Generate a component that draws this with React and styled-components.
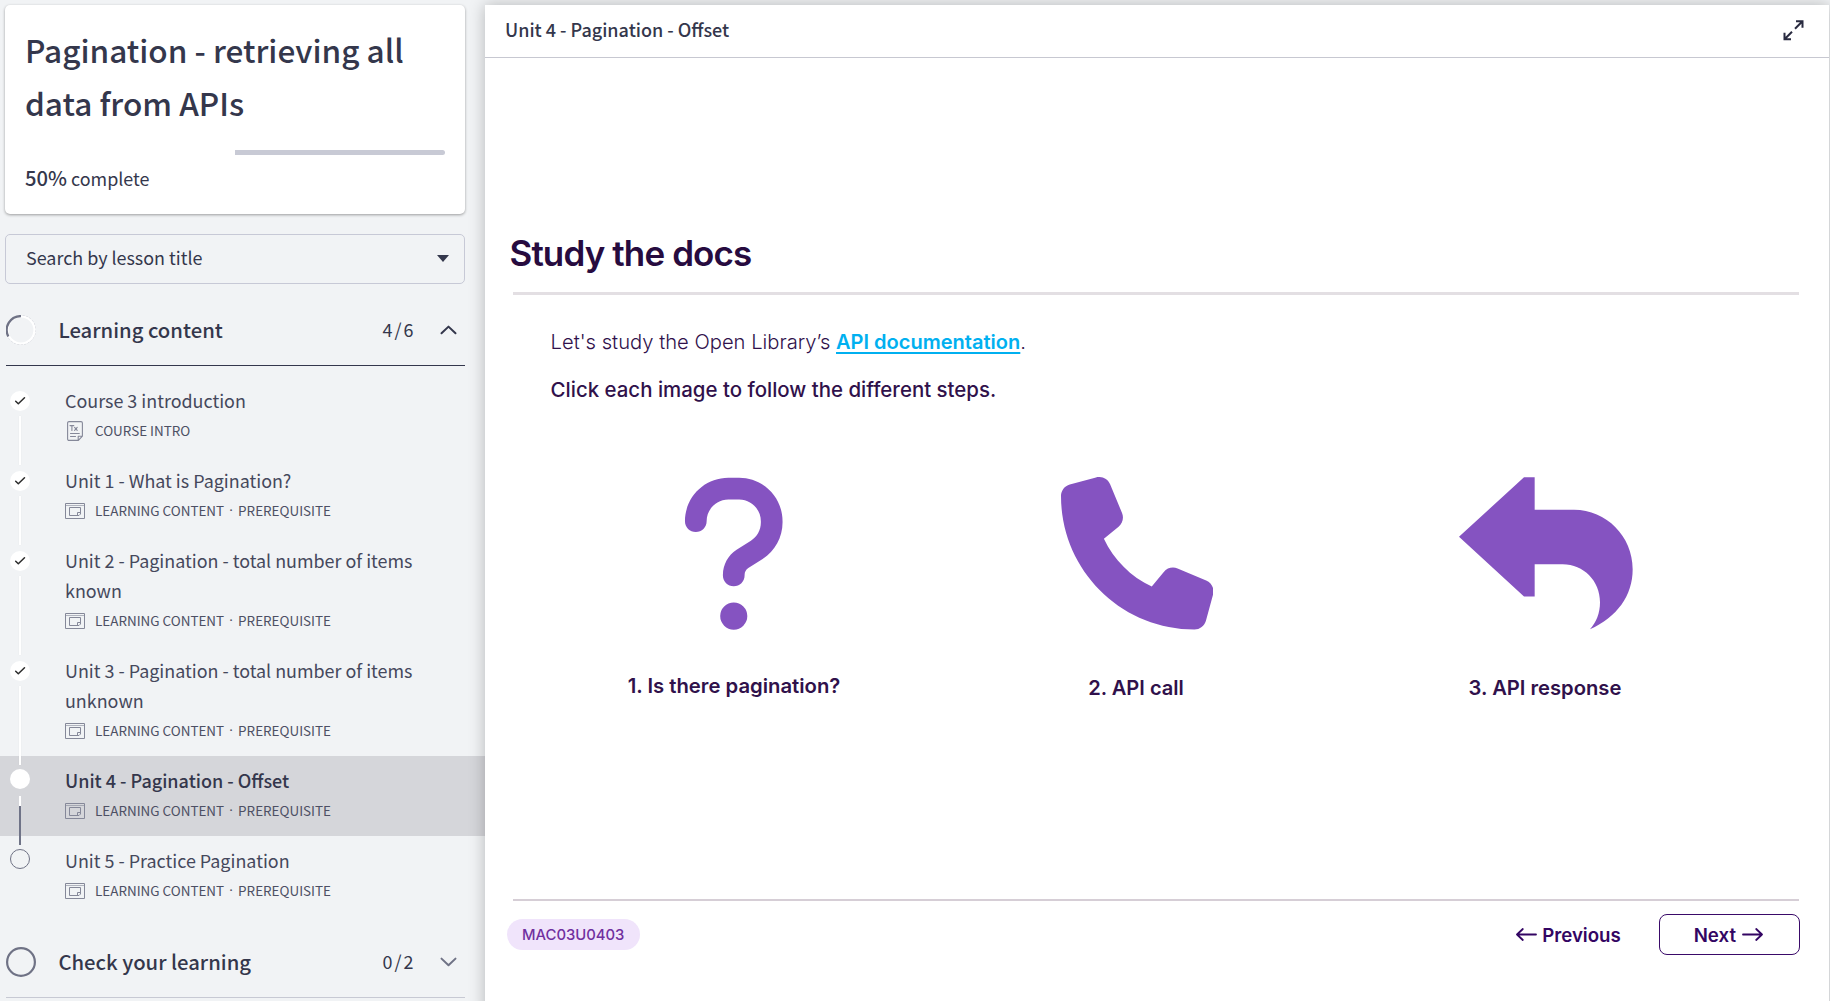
import React from 'react';
import styled, { createGlobalStyle } from 'styled-components';
import { FaQuestion, FaPhone } from 'react-icons/fa6';

const GlobalStyle = createGlobalStyle`
  * { box-sizing: border-box; }
  body { margin: 0; overflow: hidden; background: #f1f3f5; }
  h1, h2, h3, p, ul { margin: 0; padding: 0; font-weight: inherit; }
  svg { display: block; flex-shrink: 0; }
`;

const Page = styled.div`
  display: flex;
  width: 1830px;
  height: 1001px;
  overflow: hidden;
  background: #f1f3f5;
  color: #34374c;
  font-family: 'Noto Sans CJK SC', 'Source Sans Pro', sans-serif;
  font-size: 17.92px;
  line-height: 30px;
`;

const Sidebar = styled.aside`
  width: 485px;
  flex-shrink: 0;
  padding-top: 5px;
`;

const CourseCard = styled.section`
  width: 460px;
  height: 209px;
  margin-left: 5px;
  padding: 18px 20px 0;
  background: #fff;
  border-radius: 5px;
  box-shadow: 0 1px 3px rgba(0, 0, 0, 0.36);
`;

const CourseTitle = styled.h1`
  font-size: 31.55px;
  font-weight: 500;
  line-height: 53px;
`;

const Progress = styled.div`
  height: 5px;
  margin-top: 21px;
  display: flex;
  justify-content: flex-end;
  background: #fff;
`;

const Remaining = styled.div`
  width: 50%;
  background: #c8cad5;
  border-radius: 0 3px 3px 0;
`;

const ProgressText = styled.p`
  margin-top: 8px;
  strong { font-size: 20.2px; font-weight: 500; }
`;

const Search = styled.div`
  width: 460px;
  height: 50px;
  margin: 20px 0 0 5px;
  padding: 0 15px 5px 20px;
  display: flex;
  align-items: center;
  justify-content: space-between;
  border: 1px solid #c7c9d6;
  border-radius: 5px;
`;

const Caret = styled.i`
  margin-top: 4px;
  border: 6px solid transparent;
  border-top: 7px solid #34374c;
  border-bottom: 0;
`;

const SectionHeader = styled.header`
  width: 459.5px;
  height: 71px;
  margin: 11px 0 0 5.5px;
  padding-left: 0.5px;
  display: flex;
  align-items: center;
  border-bottom: 1px solid ${(p) => (p.$open ? '#34374c' : '#c7c9d3')};
`;

const SectionTitle = styled.h2`
  flex: 1;
  margin: -3px 0 0 22.4px;
  font-size: 20.27px;
  font-weight: 500;
`;

const Count = styled.span`
  width: 57px;
  letter-spacing: 2px;
  margin-top: -3px;
`;

const ChevronBox = styled.span`
  width: 25.5px;
  padding-left: 0.5px;
  color: ${(p) => (p.$open ? '#34374c' : '#6f7285')};
`;

const LessonList = styled.ul`
  padding-top: 10px;
  list-style: none;
`;

const Lesson = styled.li`
  display: flex;
  padding-bottom: 11px;
  background: ${(p) => (p.$active ? '#d5d6da' : 'transparent')};
`;

const Rail = styled.div`
  position: relative;
  z-index: 1;
  width: 40px;
  margin: ${(p) => (p.$done ? '15px' : '13px')} 25px -20px 0;
  display: flex;
  flex-direction: column;
  align-items: center;
`;

const Dot = styled.span`
  width: 20px;
  height: 20px;
  display: flex;
  align-items: center;
  justify-content: center;
  border-radius: 50%;
  background: ${(p) => (p.$empty ? 'transparent' : '#fff')};
  border: ${(p) => (p.$empty ? '1px solid #6f7285' : '0')};
`;

const Connector = styled.span`
  flex: 1;
  width: 2px;
  margin-top: ${(p) => (p.$pending ? '7px' : '5px')};
  background: ${(p) => (p.$pending ? 'linear-gradient(#fff 10px, #6f7387 10px)' : '#fff')};
  box-shadow: ${(p) => (p.$pending ? 'none' : '0 0 1px rgba(0, 0, 0, 0.12)')};
`;

const LessonBody = styled.div`
  width: 360px;
  padding-top: 9px;
`;

const LessonTitle = styled.h3`
  font-size: ${(p) => (p.$active ? '18px' : '17.92px')};
  font-weight: ${(p) => (p.$active ? 500 : 400)};
  color: ${(p) => (p.$active ? '#34374c' : '#45485c')};
`;

const Meta = styled.div`
  height: 30px;
  display: flex;
  align-items: center;
  color: #4d5064;
  font-size: 13.45px;
  white-space: pre;
`;

const MetaIcon = styled.span`
  width: 20px;
  margin: 1px 10px 0 0;
  display: flex;
  justify-content: center;
  color: #858899;
`;

const Separator = styled.span`
  width: 14px;
  text-align: center;
  font-family: 'Noto Sans', sans-serif;
`;

const Main = styled.main`
  width: 1344px;
  height: 1010px;
  margin-top: 5px;
  background: #fff;
  box-shadow: 0 0 15px rgba(0, 0, 0, 0.25);
`;

const TopBar = styled.header`
  height: 53px;
  padding: 0 25px 0 20px;
  display: flex;
  align-items: center;
  justify-content: space-between;
  border-bottom: 1px solid #c7c8d1;

  svg { margin-bottom: 2px; }
`;

const UnitName = styled.h2`
  margin-top: -4px;
  font-size: 18px;
  font-weight: 500;
`;

const Slide = styled.article`
  padding: 170px 30px 0 28px;
  color: #30114b;
  font-family: Inter, sans-serif;
`;

const SlideTitle = styled.h1`
  margin: 0 0 14px -3.5px;
  font-size: 35px;
  font-weight: 600;
  line-height: 50px;
  letter-spacing: -0.88px;
  color: #270b3f;
`;

const Rule = styled.div`
  height: ${(p) => p.$weight}px;
  background: ${(p) => p.$color};
`;

const Copy = styled.div`
  padding: 32px 0 0 37.6px;
`;

const Intro = styled.p`
  font-size: 20.2px;
  font-weight: 300;
`;

const DocLink = styled.a`
  color: #00b0f0;
  font-size: 20.05px;
  font-weight: 600;
  text-decoration: underline;
  text-decoration-thickness: 1.5px;
  text-underline-offset: 3px;
  text-decoration-skip-ink: none;
`;

const Instruction = styled.p`
  margin-top: 18px;
  font-size: 20.45px;
  font-weight: 500;
`;

const Steps = styled.div`
  margin: 72px 0 0 19.5px;
  display: flex;
  height: 422px;
`;

const Step = styled.button`
  width: ${(p) => p.$width}px;
  padding: 0;
  display: flex;
  flex-direction: column;
  align-items: center;
  border: 0;
  background: none;
  font: inherit;
`;

const StepArt = styled.span`
  height: 153px;
  display: flex;
  align-items: center;
  color: #8553c1;
`;

const StepLabel = styled.span`
  margin: ${(p) => p.$drop}px ${(p) => p.$inset || 0}px 0 0;
  color: #30114b;
  font-size: ${(p) => p.$size}px;
  font-weight: 600;
  line-height: 30px;
`;

const Footer = styled.footer`
  padding: 13px 0 0;
  display: flex;
  align-items: flex-start;
  color: #330563;
  font-size: 18.65px;
  font-weight: 600;
`;

const Code = styled.span`
  width: 133px;
  height: 31px;
  margin: 5px auto 0 -6px;
  padding: 1px 0 0 15px;
  border-radius: 16px;
  background: #f0e4fb;
  color: #7030a0;
  font-size: 14.83px;
  font-weight: 500;
`;

const NavButton = styled.button`
  height: 41px;
  padding: ${(p) => (p.$outlined ? '0 36px 0 34px' : '0')};
  margin: ${(p) => (p.$outlined ? '0 -0.5px 0 38px' : '0')};
  display: flex;
  align-items: center;
  gap: 5.5px;
  color: inherit;
  font: inherit;
  background: none;
  border: ${(p) => (p.$outlined ? '1.5px solid #3a0a69' : '0')};
  border-radius: 8px;
`;

const stroke = { fill: 'none', stroke: 'currentColor', strokeLinecap: 'round', strokeLinejoin: 'round' };

const Chevron = ({ up }) => (
  <svg width="17" height="10" viewBox="0 0 17 10" {...stroke} strokeWidth="2">
    <path d={up ? 'M1.5 8.3 8.5 1.6 15.5 8.3' : 'M1.5 1.6 8.5 8.3 15.5 1.6'} />
  </svg>
);

const Tick = () => (
  <svg width="12" height="10" viewBox="0 0 12 10" {...stroke} stroke="#2b2b2b" strokeWidth="1.5">
    <path d="M1.7 5.3 4.3 7.8 10.5 1.7" />
  </svg>
);

const PartialRing = () => (
  <svg width="30" height="30" viewBox="0 0 30 30" fill="none">
    <circle cx="15" cy="15" r="14.6" stroke="#b9bbc6" strokeWidth=".6" strokeDasharray="2 1.5" />
    <circle cx="15" cy="15" r="13.5" stroke="#fff" strokeWidth="2.2" />
    <path d="M2.3 21.5A14 14 0 0 1 15 1.1" stroke="#6f7285" strokeWidth="2.3" />
  </svg>
);

const EmptyRing = () => (
  <svg width="30" height="30" viewBox="0 0 30 30" fill="none">
    <circle cx="15" cy="15" r="13.9" stroke="#6f7285" strokeWidth="2.2" />
  </svg>
);

const TextDocIcon = () => (
  <svg width="16" height="20" viewBox="0 0 16 20" {...stroke} strokeWidth="1.1">
    <path d="M2 .6H14A1.4 1.4 0 0 1 15.4 2V15.2L11.4 19.4H2A1.4 1.4 0 0 1 .6 18V2A1.4 1.4 0 0 1 2 .6ZM11.2 19.2V15.2H15.2" />
    <path d="M3 4.6H6.8M4.9 4.6V9.4M7.6 6.4 10.2 9.4M10.2 6.4 7.6 9.4M3.5 12.5H12.3M3.5 15.5H8.5" />
  </svg>
);

const ContentIcon = () => (
  <svg width="20" height="16" viewBox="0 0 20 16" fill="none" stroke="currentColor" strokeWidth="1">
    <path d="M.5.5H19.5V15.5H.5Z" />
    <path d="M.5 2.5H19.5" opacity=".6" />
    <path d="M4.5 4.5H15.5V11L14 12.5H4.5ZM12.5 12.5V9.5H15.5" />
  </svg>
);

const ExpandIcon = () => (
  <svg width="21" height="21" viewBox="0 0 21 21" fill="none" stroke="#292b40" strokeWidth="2">
    <path d="M12 8.7 19.2 1.5M13 1.2H19.5V7.7M9 11.8 1.8 19M1.5 12.8V19.3H8" />
  </svg>
);

const Arrow = ({ right }) => (
  <svg width="21" height="13" viewBox="0 0 21 13" {...stroke} strokeWidth="1.8">
    <path d={right ? 'M1 6.5H20M14.2 1 20 6.5 14.2 12' : 'M20 6.5H1M6.8 1 1 6.5 6.8 12'} />
  </svg>
);

const ReturnArrow = () => (
  <svg width="174" height="153" viewBox="176 112 522 458" fill="currentColor">
    <path d="M176 291 371 112H403V210H521C618 210 697 290 697 388C697 467 650 532 569 568C588 546 599 520 599 487C599 423 550 373 487 373H403V470H371Z" />
  </svg>
);

const lessons = [
  { title: 'Course 3 introduction', kind: 'COURSE INTRO', state: 'done' },
  { title: 'Unit 1 - What is Pagination?', state: 'done' },
  { title: 'Unit 2 - Pagination - total number of items known', state: 'done' },
  { title: 'Unit 3 - Pagination - total number of items unknown', state: 'done' },
  { title: 'Unit 4 - Pagination - Offset', state: 'active' },
  { title: 'Unit 5 - Practice Pagination', state: 'todo' },
];

const Section = ({ title, count, open, ring }) => (
  <SectionHeader $open={open}>
    {ring}
    <SectionTitle>{title}</SectionTitle>
    <Count>{count}</Count>
    <ChevronBox $open={open}><Chevron up={open} /></ChevronBox>
  </SectionHeader>
);

const LessonRow = ({ title, kind, state }) => (
  <Lesson $active={state === 'active'}>
    <Rail $done={state === 'done'}>
      <Dot $empty={state === 'todo'}>{state === 'done' && <Tick />}</Dot>
      {state !== 'todo' && <Connector $pending={state === 'active'} />}
    </Rail>
    <LessonBody>
      <LessonTitle $active={state === 'active'}>{title}</LessonTitle>
      <Meta>
        <MetaIcon>{kind ? <TextDocIcon /> : <ContentIcon />}</MetaIcon>
        {kind || (
          <>
            LEARNING CONTENT<Separator>·</Separator>PREREQUISITE
          </>
        )}
      </Meta>
    </LessonBody>
  </Lesson>
);

export default function App() {
  return (
    <Page>
      <GlobalStyle />
      <Sidebar>
        <CourseCard>
          <CourseTitle>Pagination - retrieving all data from APIs</CourseTitle>
          <Progress><Remaining /></Progress>
          <ProgressText><strong>50%</strong> complete</ProgressText>
        </CourseCard>
        <Search>Search by lesson title<Caret /></Search>
        <Section title="Learning content" count="4/6" open ring={<PartialRing />} />
        <LessonList>
          {lessons.map((l) => <LessonRow key={l.title} {...l} />)}
        </LessonList>
        <Section title="Check your learning" count="0/2" ring={<EmptyRing />} />
      </Sidebar>
      <Main>
        <TopBar>
          <UnitName>Unit 4 - Pagination - Offset</UnitName>
          <ExpandIcon />
        </TopBar>
        <Slide>
          <SlideTitle>Study the docs</SlideTitle>
          <Rule $weight={3} $color="#e3dfe3" />
          <Copy>
            <Intro>Let's study the Open Library’s <DocLink>API documentation</DocLink>.</Intro>
            <Instruction>Click each image to follow the different steps.</Instruction>
          </Copy>
          <Steps>
            <Step $width={403}>
              <StepArt><FaQuestion size={173.5} /></StepArt>
              <StepLabel $drop={41} $size={20.3}>1. Is there pagination?</StepLabel>
            </Step>
            <Step $width={403}>
              <StepArt><FaPhone size={152.5} /></StepArt>
              <StepLabel $drop={43} $size={20.1} $inset={2}>2. API call</StepLabel>
            </Step>
            <Step $width={414}>
              <StepArt><ReturnArrow /></StepArt>
              <StepLabel $drop={43} $size={20.2} $inset={1}>3. API response</StepLabel>
            </Step>
          </Steps>
          <Rule $weight={2} $color="#d6ced6" />
          <Footer>
            <Code>MAC03U0403</Code>
            <NavButton><Arrow />Previous</NavButton>
            <NavButton $outlined>Next<Arrow right /></NavButton>
          </Footer>
        </Slide>
      </Main>
    </Page>
  );
}
